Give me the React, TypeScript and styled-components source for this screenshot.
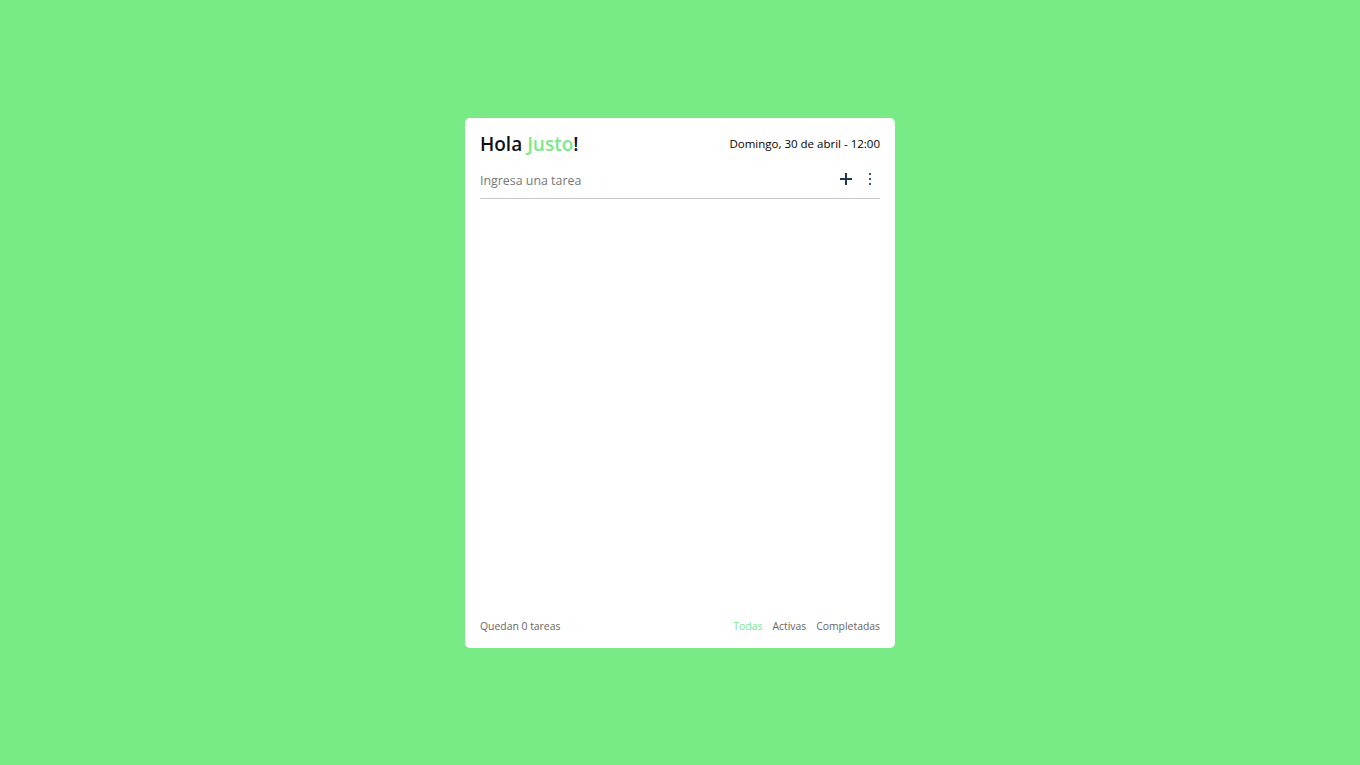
import styled, { createGlobalStyle } from "styled-components"

const GREEN = "#78ea86"

const GlobalStyle = createGlobalStyle`
  html, body, #root {
    margin: 0;
    height: 100%;
  }
  body {
    background: ${GREEN};
    font-family: "Open Sans", "Noto Sans", sans-serif;
  }
`

interface FilterProps {
  active?: boolean
}

const filters = ["Todas", "Activas", "Completadas"]

function PlusIcon (): JSX.Element {
  return (
    <svg width="12" height="12" viewBox="0 0 12 12">
      <path d="M6 0v12M0 6h12" stroke="#1f3550" strokeWidth="2" />
    </svg>
  )
}

function DotsIcon (): JSX.Element {
  return (
    <svg width="4" height="14" viewBox="0 0 4 14">
      <rect x="1" y="1" width="2" height="2" fill="#2e5a86" />
      <rect x="1" y="6" width="2" height="2" fill="#2e5a86" />
      <rect x="1" y="11" width="2" height="2" fill="#2e5a86" />
    </svg>
  )
}

function App (): JSX.Element {
  return (
    <>
      <GlobalStyle />
      <Page>
        <Card>
          <Header>
            <Greeting>Hola <Name>Justo</Name>!</Greeting>
            <DateText>Domingo, 30 de abril - 12:00</DateText>
          </Header>
          <InputRow>
            <TaskInput placeholder="Ingresa una tarea" />
            <IconButton aria-label="Agregar"><PlusIcon /></IconButton>
            <IconButton aria-label="Opciones"><DotsIcon /></IconButton>
          </InputRow>
          <TaskList />
          <Footer>
            <Remaining>Quedan 0 tareas</Remaining>
            <Filters>
              {filters.map((f, i) => (
                <Filter key={f} active={i === 0}>{f}</Filter>
              ))}
            </Filters>
          </Footer>
        </Card>
      </Page>
    </>
  )
}

const Page = styled.div`
  height: 100%;
  display: flex;
  align-items: center;
  justify-content: center;
`

const Card = styled.div`
  width: 430px;
  height: 530px;
  box-sizing: border-box;
  background: #fff;
  border-radius: 5px;
  padding: 15px 15px 15px;
  display: flex;
  flex-direction: column;
`

const Header = styled.div`
  display: flex;
  align-items: center;
  justify-content: space-between;
  height: 22px;
`

const Greeting = styled.h1`
  margin: 0;
  font-size: 19px;
  font-weight: 600;
  color: #111;
`

const Name = styled.span`
  color: ${GREEN};
`

const DateText = styled.span`
  font-size: 11.5px;
  color: #000;
`

const InputRow = styled.div`
  display: flex;
  align-items: center;
  gap: 12px;
  margin-top: 8px;
  padding-right: 6px;
  height: 35px;
  border-bottom: 1px solid #c8c8c8;
`

const TaskInput = styled.input`
  flex: 1;
  border: none;
  outline: none;
  padding: 0;
  font-family: inherit;
  font-size: 12.4px;
  color: #333;
  &::placeholder {
    color: #777;
  }
`

const IconButton = styled.button`
  border: none;
  background: none;
  padding: 0 2px;
  height: 20px;
  display: flex;
  align-items: center;
  justify-content: center;
  cursor: pointer;
  margin-bottom: 3px;
`

const TaskList = styled.div`
  flex: 1;
`

const Footer = styled.div`
  display: flex;
  align-items: center;
  justify-content: space-between;
  font-size: 10.4px;
`

const Remaining = styled.span`
  color: #666;
`

const Filters = styled.div`
  display: flex;
  gap: 10px;
`

const Filter = styled.span<FilterProps>`
  color: ${props => props.active === true ? GREEN : "#666"};
  cursor: pointer;
`

export default App
